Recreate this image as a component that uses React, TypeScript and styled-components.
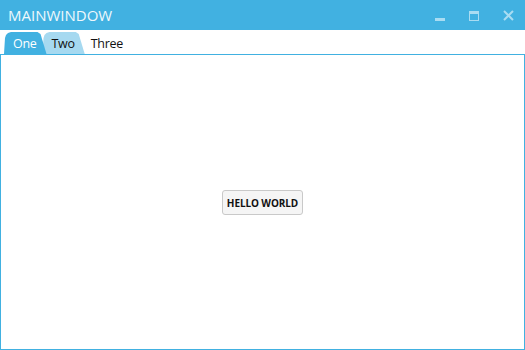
import { FC } from "react";
import styled, { createGlobalStyle } from "styled-components";

const GlobalStyle = createGlobalStyle`
  html, body {
    margin: 0;
    padding: 0;
    background: #ffffff;
  }
  body {
    font-family: "Open Sans", "Noto Sans", sans-serif;
  }
`;

const tabs = [
  { label: "One", variant: "active" as const },
  { label: "Two", variant: "light" as const },
  { label: "Three", variant: "plain" as const },
];

type TabVariant = "active" | "light" | "plain";

const App: FC = () => {
  return (
    <>
      <GlobalStyle />
      <Window>
        <TitleBar>
          <Title>MAINWINDOW</Title>
          <Controls>
            <ControlBtn aria-label="minimize">
              <svg width="10" height="10" viewBox="0 0 10 10">
                <rect x="0" y="7" width="10" height="3" fill="currentColor" />
              </svg>
            </ControlBtn>
            <ControlBtn aria-label="maximize">
              <svg width="10" height="10" viewBox="0 0 10 10">
                <rect x="0" y="0" width="10" height="3" fill="currentColor" />
                <rect x="0.5" y="0.5" width="9" height="9" fill="none" stroke="currentColor" strokeWidth="1" />
              </svg>
            </ControlBtn>
            <ControlBtn aria-label="close">
              <svg width="11" height="11" viewBox="0 0 11 11">
                <path d="M1 1 L10 10 M10 1 L1 10" stroke="currentColor" strokeWidth="2" />
              </svg>
            </ControlBtn>
          </Controls>
        </TitleBar>

        <TabStrip>
          {tabs.map((t, i) => (
            <Tab key={t.label} $variant={t.variant} style={{ zIndex: tabs.length - i }}>
              {t.label}
            </Tab>
          ))}
        </TabStrip>

        <Content>
          <HelloBtn>HELLO WORLD</HelloBtn>
        </Content>
      </Window>
    </>
  );
};

export default App;

const Window = styled.div`
  width: 525px;
  height: 350px;
  display: flex;
  flex-direction: column;
  box-sizing: border-box;
`;

const TitleBar = styled.div`
  height: 30px;
  flex-shrink: 0;
  background: #41b1e1;
  display: flex;
  align-items: center;
  justify-content: space-between;
  padding-left: 8px;
`;

const Title = styled.div`
  color: #eef8fc;
  font-size: 15px;
  line-height: 30px;
  margin-top: -1px;
`;

const Controls = styled.div`
  display: flex;
  align-items: center;
  height: 100%;
`;

const ControlBtn = styled.div`
  width: 34px;
  height: 30px;
  display: flex;
  align-items: center;
  justify-content: center;
  color: #a9dcf2;
  margin-top: 1px;
`;

const TabStrip = styled.div`
  height: 24px;
  flex-shrink: 0;
  display: flex;
  align-items: flex-end;
  padding-left: 4px;
`;

const Tab = styled.div<{ $variant: TabVariant }>`
  position: relative;
  height: 22px;
  display: flex;
  align-items: center;
  font-size: 12.5px;
  letter-spacing: -0.3px;
  color: ${(p) => (p.$variant === "active" ? "#ffffff" : "#111111")};
  background: ${(p) =>
    p.$variant === "active" ? "#41b1e1" : p.$variant === "light" ? "#a6d9f0" : "transparent"};
  padding: ${(p) => (p.$variant === "plain" ? "0 0 0 6px" : "0 10px 0 9px")};
  margin-left: ${(p) => (p.$variant === "light" ? "-4px" : "0")};
  clip-path: ${(p) =>
    p.$variant === "plain"
      ? "none"
      : "polygon(0 100%, 1px 6px, 2px 3px, 4px 1px, 7px 0, calc(100% - 9px) 0, calc(100% - 6px) 2px, 100% 100%)"};
`;

const Content = styled.div`
  flex: 1;
  border: 1px solid #41b1e1;
  display: flex;
  align-items: center;
  justify-content: center;
`;

const HelloBtn = styled.button`
  width: 81px;
  height: 25px;
  margin-top: 1px;
  padding: 0;
  border: 1px solid #c9c9c9;
  border-radius: 3px;
  background: #f5f5f5;
  color: #111111;
  font-family: "Open Sans", sans-serif;
  font-weight: 700;
  font-size: 10px;
  letter-spacing: -0.1px;
`;
